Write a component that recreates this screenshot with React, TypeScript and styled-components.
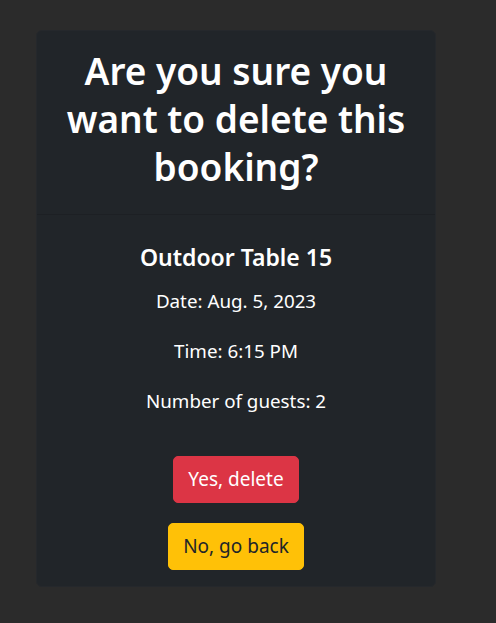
import React from 'react';
import styled, {createGlobalStyle} from 'styled-components';

const GlobalStyle = createGlobalStyle`
  html, body {
    margin: 0;
    padding: 0;
    background: #2b2b2b;
    font-family: "Noto Sans", "Open Sans", sans-serif;
    color: #fff;
  }
`;

const Page = styled.div`
  min-height: 623px;
  padding: 30px 0 0 36px;
  box-sizing: border-box;
`;

const Card = styled.div`
  width: 400px;
  background: #212529;
  border: 1px solid #25282c;
  border-radius: 6px;
  box-sizing: border-box;
  overflow: hidden;
`;

const CardHeader = styled.div`
  padding: 16px 12px 23px;
  border-bottom: 1px solid #1d2024;
  text-align: center;
`;

const Title = styled.h1`
  margin: 0;
  font-size: 37px;
  line-height: 48px;
  font-weight: 600;
`;

const CardBody = styled.div`
  padding: 28px 16px 16px;
  display: flex;
  flex-direction: column;
  align-items: center;
  text-align: center;
`;

const TableName = styled.h4`
  margin: 0 0 14px;
  font-size: 23px;
  line-height: 29px;
  font-weight: 600;
`;

const Detail = styled.p`
  margin: 0 0 20px;
  font-size: 18.8px;
  line-height: 30px;
`;

const Button = styled.button<{ $variant: 'danger' | 'warning' }>`
  font-family: inherit;
  font-size: 19px;
  line-height: 29px;
  padding: 8px 14px;
  border-radius: 5px;
  border: 1px solid ${p => p.$variant === 'danger' ? '#dc3545' : '#ffc107'};
  background: ${p => p.$variant === 'danger' ? '#dc3545' : '#ffc107'};
  color: ${p => p.$variant === 'danger' ? '#fff' : '#212529'};
  cursor: pointer;
`;

const Actions = styled.div`
  margin-top: 20px;
  display: flex;
  flex-direction: column;
  align-items: center;
  gap: 20px;
`;

const App = () => {
    return (
        <Page>
            <GlobalStyle/>
            <Card>
                <CardHeader>
                    <Title>Are you sure you want to delete this booking?</Title>
                </CardHeader>
                <CardBody>
                    <TableName>Outdoor Table 15</TableName>
                    <Detail>Date: Aug. 5, 2023</Detail>
                    <Detail>Time: 6:15 PM</Detail>
                    <Detail>Number of guests: 2</Detail>
                    <Actions>
                        <Button $variant="danger">Yes, delete</Button>
                        <Button $variant="warning">No, go back</Button>
                    </Actions>
                </CardBody>
            </Card>
        </Page>
    )
}

export default App;
